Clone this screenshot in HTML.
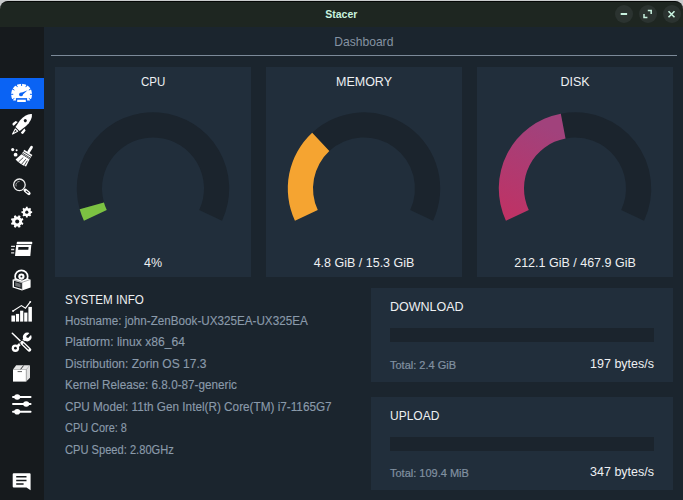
<!DOCTYPE html>
<html><head><meta charset="utf-8"><style>
*{margin:0;padding:0;box-sizing:border-box}
html,body{width:683px;height:500px;overflow:hidden;background:#c9cbcd;font-family:"Liberation Sans",sans-serif}
.il{-webkit-text-stroke:0.15px currentColor}
.tot{-webkit-text-stroke:0.2px currentColor}
#win{position:absolute;left:0;top:1px;width:683px;height:499px;border-top:1px solid #050706;border-radius:8px 8px 0 0;background:#1e2621;overflow:hidden}
#title{position:absolute;left:0;top:0;width:683px;height:26px}
#title .t{position:absolute;left:0;width:683px;top:6.7px;text-align:center;font-weight:bold;font-size:10px;color:#c8f2df;line-height:12px}
.wb{position:absolute;top:2.8px;width:18px;height:18px;border-radius:50%;background:#2b3330}
#side{position:absolute;left:0;top:27px;width:44px;height:473px;background:#161a1d}
#sel{position:absolute;left:0;top:78px;width:44px;height:31px;background:#0a63f4}
svg.ic{position:absolute}
#side2{position:absolute;left:0;top:0;width:44px;height:500px}
#side2 svg{position:absolute}
#main{position:absolute;left:44px;top:27px;width:639px;height:473px;background:#1b252e}
.abs{position:absolute}
.card{position:absolute;top:67px;width:196px;height:210px;background:#212e3b}
.card svg{position:absolute;left:0;top:0}
.ct{position:absolute;left:0;width:196px;top:8px;text-align:center;color:#eef0f2;font-size:12.5px;line-height:14px}
.cv{position:absolute;left:0;width:196px;top:189px;text-align:center;color:#eef0f2;font-size:12.5px;line-height:14px}
.il{position:absolute;left:65px;transform-origin:0 0;color:#8a9aaa;font-size:12.5px;line-height:14px;white-space:nowrap}
.box{position:absolute;left:371px;width:302px;background:#212e3b}
.bt{position:absolute;left:19px;color:#eef0f2;font-size:12.5px;line-height:14px}
.bar{position:absolute;left:19px;width:264px;height:14px;background:#1b242d}
.tot{position:absolute;left:19px;color:#8191a1;font-size:11px;line-height:13px}
.spd{position:absolute;right:19px;color:#eef0f2;font-size:12.5px;line-height:14px}
</style></head><body>
<div id="win">
 <div id="title"><div class="t"><span style="display:inline-block;transform:scaleX(1.05)">Stacer</span></div>
  <div class="wb" style="left:615px"></div><div class="wb" style="left:638.5px"></div><div class="wb" style="left:662.5px"></div>
  <svg class="abs" style="left:0;top:0" width="683" height="26">
   <path d="M620.7 11.9 H627.1" stroke="#c8f2df" stroke-width="2"/>
   <path d="M647.8 8.6 H651.2 V12 M644 12 V15.4 H647.4" fill="none" stroke="#c8f2df" stroke-width="1.5"/>
   <path d="M668.5 9.2 L674.5 15.2 M674.5 9.2 L668.5 15.2" stroke="#c8f2df" stroke-width="1.6"/>
  </svg>
 </div>
</div>
<div id="side"></div>
<div id="sel"></div>
<div id="main"></div>
<div id="side2">
<svg width="44" height="500" viewBox="0 0 44 500" style="left:0;top:0"><clipPath id="dc"><rect x="0" y="70" width="44" height="30.4"/></clipPath><circle cx="21.6" cy="94.3" r="10.55" fill="#ffffff" clip-path="url(#dc)"/><rect x="15.9" y="98.1" width="11.2" height="3" fill="#0a63f4"/><rect x="17.2" y="99.7" width="8.6" height="2.3" fill="#ffffff"/><path d="M14.37 98.47L11.60 100.07M13.25 94.30L10.05 94.30M14.37 90.12L11.60 88.52M17.43 87.07L15.83 84.30M21.60 85.95L21.60 82.75M25.78 87.07L27.38 84.30M28.83 90.12L31.60 88.52M29.95 94.30L33.15 94.30M28.83 98.47L31.60 100.07" stroke="#0a63f4" stroke-width="1"/><path d="M20.2 93.2 L27.6 90.3 L21.8 95.4Z" fill="#0a63f4"/><circle cx="21" cy="94.4" r="1.9" fill="#0a63f4"/><g transform="translate(31.9 114.1) rotate(134)"><path d="M0 0 C2.5 -3.2 7 -4.6 13 -4.1 L20.7 -2.9 L20.7 2.9 L13 4.1 C7 4.6 2.5 3.2 0 0Z" fill="#ffffff"/><circle cx="9.3" cy="0.2" r="1.55" fill="#161a1d"/><path d="M15.6 4.7 L21 4.9 C21.6 6.5 20.8 7.4 19.6 7.4 L16.2 6.9Z" fill="#ffffff"/><path d="M15.6 -4.7 L21 -4.9 C21.6 -6.5 20.8 -7.4 19.6 -7.4 L16.2 -6.9Z" fill="#ffffff"/><path d="M22.2 -1.7 L27.8 0 L22.2 1.7Z" fill="#161a1d" stroke="#ffffff" stroke-width="1.1" stroke-linejoin="round"/></g><circle cx="12.7" cy="149.6" r="1.6" fill="#ffffff"/><circle cx="16.6" cy="150.2" r="1.0" fill="#ffffff"/><circle cx="15.6" cy="154.7" r="1.9" fill="#ffffff"/><g transform="translate(26.4 155.4) rotate(32)"><rect x="-1.35" y="-11" width="2.7" height="8" rx="1.35" fill="#ffffff"/><rect x="-4.8" y="-3.6" width="9.6" height="4.6" fill="#ffffff"/><path d="M-4.8 -1.6 H4.8 M-4.8 0.2 H4.8" stroke="#161a1d" stroke-width="0.7"/><path d="M-4.8 1.6 L4.8 1.6 L5.6 9.6 C2 10.6 -3 10.6 -7 9.2Z" fill="#ffffff"/><path d="M-1.5 3.5 L-3.2 9.8 M1.5 3.5 L0.6 10.2 M3.6 4 L3.6 10" stroke="#161a1d" stroke-width="0.7"/></g><circle cx="19.4" cy="184.8" r="5.8" fill="none" stroke="#ffffff" stroke-width="1.3" opacity="0.92"/><path d="M16.2 186.4 A3.6 3.6 0 0 1 19.6 181.4" fill="none" stroke="#ffffff" stroke-width="0.8" opacity="0.7"/><path d="M25.3 190.4 L28.9 193.4" stroke="#ffffff" stroke-width="3.4" stroke-linecap="round"/><path d="M26.2 191.1 L28.1 192.7" stroke="#161a1d" stroke-width="1.1" stroke-linecap="round"/><path d="M21.95 222.21 L23.43 222.95 L22.63 224.89 L21.06 224.35 L20.05 225.36 L20.59 226.93 L18.65 227.73 L17.91 226.25 L16.49 226.25 L15.75 227.73 L13.81 226.93 L14.35 225.36 L13.34 224.35 L11.77 224.89 L10.97 222.95 L12.45 222.21 L12.45 220.79 L10.97 220.05 L11.77 218.11 L13.34 218.65 L14.35 217.64 L13.81 216.07 L15.75 215.27 L16.49 216.75 L17.91 216.75 L18.65 215.27 L20.59 216.07 L20.05 217.64 L21.06 218.65 L22.63 218.11 L23.43 220.05 L21.95 220.79Z" fill="#ffffff"/><circle cx="17.2" cy="221.5" r="4.8" fill="#ffffff"/><circle cx="17.2" cy="221.5" r="2.0" fill="#161a1d"/><path d="M30.68 211.24 L32.13 211.31 L32.13 213.09 L30.68 213.16 L30.23 214.26 L31.19 215.34 L29.94 216.59 L28.86 215.63 L27.76 216.08 L27.69 217.53 L25.91 217.53 L25.84 216.08 L24.74 215.63 L23.66 216.59 L22.41 215.34 L23.37 214.26 L22.92 213.16 L21.47 213.09 L21.47 211.31 L22.92 211.24 L23.37 210.14 L22.41 209.06 L23.66 207.81 L24.74 208.77 L25.84 208.32 L25.91 206.87 L27.69 206.87 L27.76 208.32 L28.86 208.77 L29.94 207.81 L31.19 209.06 L30.23 210.14Z" fill="#ffffff"/><circle cx="26.8" cy="212.2" r="4.0" fill="#ffffff"/><circle cx="26.8" cy="212.2" r="1.6" fill="#161a1d"/><path d="M17.4 241.8 H31.6 Q32.4 241.8 32.3 242.6 L32.1 244.2 H16.6 L16.8 242.6 Q16.9 241.8 17.4 241.8Z" fill="#ffffff"/><path d="M16.2 245.1 H31.3 L30.3 256 H15Z" fill="#ffffff"/><path d="M18.4 247 H28.6 L28.3 249.7 H18.1Z" fill="#161a1d"/><path d="M11.1 246.4 H15 M11.1 249.5 H14.2 M11.1 252.8 H14.2" stroke="#ffffff" stroke-width="1.3" opacity="0.85"/><circle cx="21.4" cy="276.6" r="6.3" fill="none" stroke="#ffffff" stroke-width="1.7"/><circle cx="21.4" cy="276.6" r="3.1" fill="#ffffff"/><circle cx="21.4" cy="276.6" r="1" fill="#161a1d"/><path d="M12.6 279.4 L16 278.2 L22 280.4 L27.2 278.2 L30.6 279.4 L30.6 287.4 L22 290.4 L12.6 287.4Z" fill="#ffffff"/><path d="M12.6 279.4 L22 282.4 L30.6 279.4 M22 282.4 V290" fill="none" stroke="#161a1d" stroke-width="0.6" opacity="0.6"/><path d="M14.6 281.5 L21.2 283.5 L21.2 288.2 L14.6 286.2Z" fill="#6a6d70" stroke="#161a1d" stroke-width="1.2"/><rect x="11.4" y="315.5" width="3.60" height="6.10" fill="#ffffff"/><rect x="15.9" y="313.9" width="3.20" height="7.70" fill="#ffffff"/><rect x="20.1" y="310.7" width="3.20" height="10.90" fill="#ffffff"/><rect x="24.2" y="312.6" width="3.20" height="9.00" fill="#ffffff"/><rect x="28.4" y="306.9" width="3.50" height="14.70" fill="#ffffff"/><path d="M13 311 L21.4 305.6 L25.5 308.2 L30.3 301.8" fill="none" stroke="#ffffff" stroke-width="1.1"/><circle cx="13" cy="311" r="0.9" fill="#ffffff"/><circle cx="30.3" cy="301.8" r="0.9" fill="#ffffff"/><path d="M26.2 338 L16.6 347.2" stroke="#ffffff" stroke-width="2.6"/><circle cx="15.4" cy="348.2" r="3.7" fill="#ffffff"/><circle cx="15.4" cy="348.2" r="1.4" fill="#161a1d"/><circle cx="27.2" cy="337" r="4.4" fill="#ffffff"/><path d="M27.4 336.8 L31.6 332.6" stroke="#161a1d" stroke-width="2.4"/><circle cx="27.6" cy="336.6" r="1.25" fill="#161a1d"/><path d="M12.1 333 L21.4 342" stroke="#161a1d" stroke-width="3"/><path d="M12.3 333.2 L21.4 342" stroke="#ffffff" stroke-width="1.5" stroke-linecap="round"/><path d="M22.2 342.8 L29.4 349.8" stroke="#161a1d" stroke-width="5.4" stroke-linecap="round"/><path d="M22.2 342.8 L29.4 349.8" stroke="#ffffff" stroke-width="3.8" stroke-linecap="round"/><path d="M23.4 344 L28.4 348.8" stroke="#161a1d" stroke-width="1.1" stroke-linecap="round"/><path d="M13 369.5 L16.2 365.3 L30 365.3 L26.2 369.5Z" fill="#e6e6e6"/><rect x="13" y="369.5" width="13.2" height="12.1" fill="#ffffff"/><path d="M26.2 369.5 L30 365.3 L30 377.8 L26.2 381.6Z" fill="#e0e0e0"/><path d="M20.6 369.3 L23.6 365.5" stroke="#161a1d" stroke-width="0.9"/><path d="M17.6 371.6 H22" stroke="#555" stroke-width="0.9"/><path d="M26.2 369.6 V381.6" stroke="#888" stroke-width="0.5"/><path d="M13 397 H30.6 M13 404 H30.6 M13 411.7 H30.6" stroke="#ffffff" stroke-width="1.9" stroke-linecap="round"/><ellipse cx="17.2" cy="397" rx="3" ry="2.8" fill="#ffffff"/><ellipse cx="26.2" cy="404" rx="3" ry="2.8" fill="#ffffff"/><ellipse cx="17.2" cy="411.7" rx="3" ry="2.8" fill="#ffffff"/><path d="M13.7 473.3 H29.6 Q30.6 473.3 30.6 474.3 V490.3 L26.5 487.4 H13.7 Q12.7 487.4 12.7 486.4 V474.3 Q12.7 473.3 13.7 473.3Z" fill="#ffffff"/><path d="M16.2 476.8 H26.5 M16.2 480.4 H26.5 M16.2 483.9 H23.6" stroke="#161a1d" stroke-width="1.5"/></svg>
</div>
<div class="abs" style="left:0;top:0;width:683px;height:500px">
 <div class="abs" style="left:44px;top:34.5px;width:639px;text-align:center;color:#8593a2;font-size:13px;line-height:14px"><span style="display:inline-block;transform:scaleX(0.93)">Dashboard</span></div>
 <div class="abs" style="left:51px;top:55px;width:626px;height:1px;background:#7c8a99"></div>
 <div class="card" style="left:55px"><svg class="g" width="196" height="210" viewBox="0 0 196 210"><path d="M24.68 142.25A76.2 76.2 0 1 1 167.06 153.70L144.22 143.05A51 51 0 1 0 48.93 135.39Z" fill="#1b242d"/><path d="M28.94 153.70A76.2 76.2 0 0 1 24.68 142.25L48.93 135.39A51 51 0 0 0 51.78 143.05Z" fill="#7cc242"/></svg><div class="ct"><span style="display:inline-block;transform:scaleX(0.92)">CPU</span></div><div class="cv">4%</div></div>
<div class="card" style="left:266px"><svg class="g" width="196" height="210" viewBox="0 0 196 210"><path d="M46.18 65.63A76.2 76.2 0 0 1 167.06 153.70L144.22 143.05A51 51 0 0 0 63.32 84.11Z" fill="#1b242d"/><path d="M28.94 153.70A76.2 76.2 0 0 1 46.18 65.63L63.32 84.11A51 51 0 0 0 51.78 143.05Z" fill="#f5a431"/></svg><div class="ct">MEMORY</div><div class="cv">4.8 GiB / 15.3 GiB</div></div>
<div class="card" style="left:477px"><svg class="g" width="196" height="210" viewBox="0 0 196 210"><defs><linearGradient id="dg" x1="0" y1="1" x2="0.3" y2="0"><stop offset="0" stop-color="#c13163"/><stop offset="1" stop-color="#a1427c"/></linearGradient></defs><path d="M83.80 46.63A76.2 76.2 0 0 1 167.06 153.70L144.22 143.05A51 51 0 0 0 88.50 71.39Z" fill="#1b242d"/><path d="M28.94 153.70A76.2 76.2 0 0 1 83.80 46.63L88.50 71.39A51 51 0 0 0 51.78 143.05Z" fill="url(#dg)"/></svg><div class="ct">DISK</div><div class="cv">212.1 GiB / 467.9 GiB</div></div>

 <div class="abs" style="left:65px;top:292.7px;transform:scaleX(0.93);transform-origin:0 0;color:#eef0f2;font-size:12.5px;line-height:14px">SYSTEM INFO</div>
 <div class="il" style="top:313.8px;transform:scaleX(0.934)">Hostname: john-ZenBook-UX325EA-UX325EA</div><div class="il" style="top:335.3px;transform:scaleX(0.97)">Platform: linux x86_64</div><div class="il" style="top:356.7px;transform:scaleX(0.96)">Distribution: Zorin OS 17.3</div><div class="il" style="top:378.2px;transform:scaleX(0.937)">Kernel Release: 6.8.0-87-generic</div><div class="il" style="top:399.6px;transform:scaleX(0.94)">CPU Model: 11th Gen Intel(R) Core(TM) i7-1165G7</div><div class="il" style="top:421.1px;transform:scaleX(0.873)">CPU Core: 8</div><div class="il" style="top:442.6px;transform:scaleX(0.89)">CPU Speed: 2.80GHz</div>
 <div class="box" style="top:288px;height:94px"><div class="bt" style="top:12px">DOWNLOAD</div><div class="bar" style="top:40px"></div><div class="tot" style="top:71px">Total: 2.4 GiB</div><div class="spd" style="top:69px">197 bytes/s</div></div>
 <div class="box" style="top:397px;height:93px"><div class="bt" style="top:12px;transform:scaleX(0.96);transform-origin:0 0">UPLOAD</div><div class="bar" style="top:40px"></div><div class="tot" style="top:70px">Total: 109.4 MiB</div><div class="spd" style="top:68px">347 bytes/s</div></div>
</div>
</body></html>
